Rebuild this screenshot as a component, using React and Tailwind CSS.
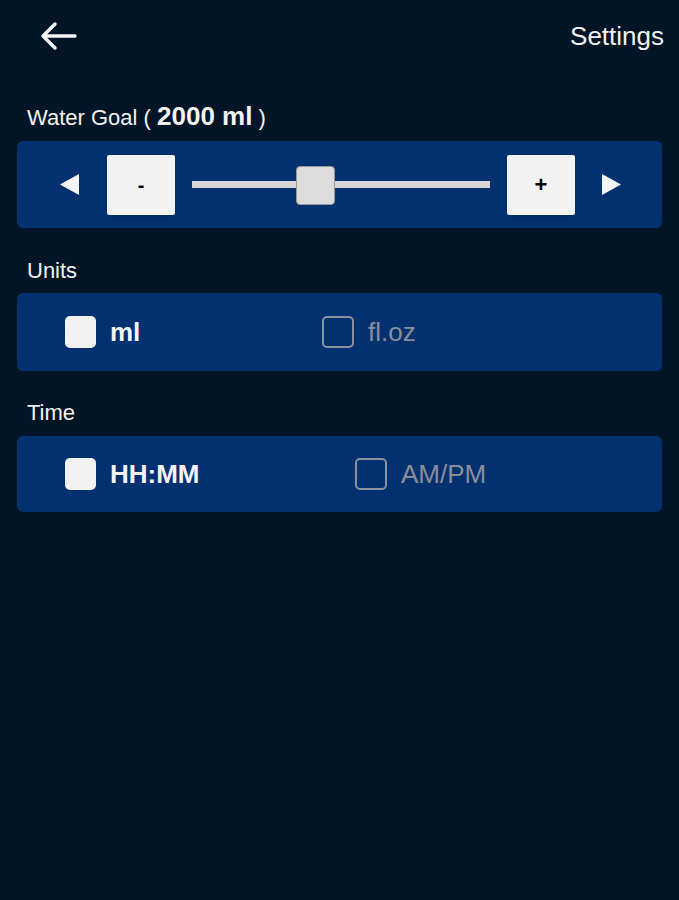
import React, { useState } from "react";

function Arrow({ dir }) {
  return (
    <svg width="20" height="21" viewBox="0 0 20 21" className="shrink-0">
      {dir === "left" ? (
        <polygon points="19,0 19,21 0,10.5" fill="#f4f4f4" />
      ) : (
        <polygon points="1,0 1,21 20,10.5" fill="#f4f4f4" />
      )}
    </svg>
  );
}

function Option({ checked, label, width, onClick }) {
  return (
    <button
      onClick={onClick}
      className={`flex items-center gap-[14px] shrink-0 ${width}`}
    >
      {checked ? (
        <span className="w-[31px] h-[32px] rounded-[5px] bg-[#f2f2f2]" />
      ) : (
        <span className="w-[32px] h-[32px] rounded-[5px] border-2 border-[#8c91a0]" />
      )}
      <span
        className={
          checked
            ? "text-[26px] font-bold text-[#f4f4f4] leading-none"
            : "text-[26px] text-[#8a8e9b] leading-none"
        }
      >
        {label}
      </span>
    </button>
  );
}

export default function App() {
  const [goal, setGoal] = useState(2000);
  const [unit, setUnit] = useState("ml");
  const [clock, setClock] = useState("24");

  const pct = (goal / 5000) * 100;

  return (
    <div
      className="min-h-screen w-full bg-[#021526] px-[17px] text-[#f2f2f2]"
      style={{ fontFamily: '"Liberation Sans", Arial, sans-serif' }}
    >
      {/* header */}
      <header className="h-[72px] flex items-center justify-between">
        <button className="ml-[22px]">
          <svg width="38" height="30" viewBox="0 0 38 30" fill="none">
            <path
              d="M36 15H4M16 3L4 15l12 12"
              stroke="#f4f4f4"
              strokeWidth="3.4"
              strokeLinecap="round"
              strokeLinejoin="round"
            />
          </svg>
        </button>
        <h1 className="text-[26px] leading-none mr-[-2px]">Settings</h1>
      </header>

      {/* water goal */}
      <div className="pt-[31px] pb-[10px] pl-[10px] leading-[27px] text-[22px]">
        Water Goal ({" "}
        <span className="text-[26px] font-bold">{goal} ml</span> )
      </div>
      <div className="h-[87px] rounded-[6px] bg-[#03316f] flex items-center pl-[43px]">
        <Arrow dir="left" />
        <button
          onClick={() => setGoal((g) => Math.max(100, g - 100))}
          className="ml-[27px] w-[68px] h-[60px] bg-[#f2f2f2] rounded-[2px] text-black font-bold text-[20px] shadow-sm"
        >
          -
        </button>
        <div className="ml-[17px] w-[298px] h-[40px] relative flex items-center">
          <div className="w-full h-[7px] bg-[#d6d6d6]" />
          <div
            className="absolute top-[1px] w-[39px] h-[39px] rounded-[4px] bg-[#dcdcdc] border border-[#9a9a9a]"
            style={{ left: `${(pct / 100) * (298 - 39)}px` }}
          />
        </div>
        <button
          onClick={() => setGoal((g) => Math.min(5000, g + 100))}
          className="ml-[17px] w-[68px] h-[60px] bg-[#f2f2f2] rounded-[2px] text-black font-bold text-[22px] shadow-sm"
        >
          +
        </button>
        <div className="ml-[26px]">
          <Arrow dir="right" />
        </div>
      </div>

      {/* units */}
      <div className="pt-[30px] pb-[10px] pl-[10px] leading-[25px] text-[22px]">Units</div>
      <div className="h-[78px] rounded-[6px] bg-[#03316f] flex items-center pl-[48px]">
        <Option
          checked={unit === "ml"}
          label="ml"
          width="w-[257px]"
          onClick={() => setUnit("ml")}
        />
        <Option
          checked={unit === "oz"}
          label="fl.oz"
          width=""
          onClick={() => setUnit("oz")}
        />
      </div>

      {/* time */}
      <div className="pt-[29px] pb-[11px] pl-[10px] leading-[25px] text-[22px]">Time</div>
      <div className="h-[76px] rounded-[6px] bg-[#03316f] flex items-center pl-[48px]">
        <Option
          checked={clock === "24"}
          label="HH:MM"
          width="w-[290px]"
          onClick={() => setClock("24")}
        />
        <Option
          checked={clock === "12"}
          label="AM/PM"
          width=""
          onClick={() => setClock("12")}
        />
      </div>
    </div>
  );
}
